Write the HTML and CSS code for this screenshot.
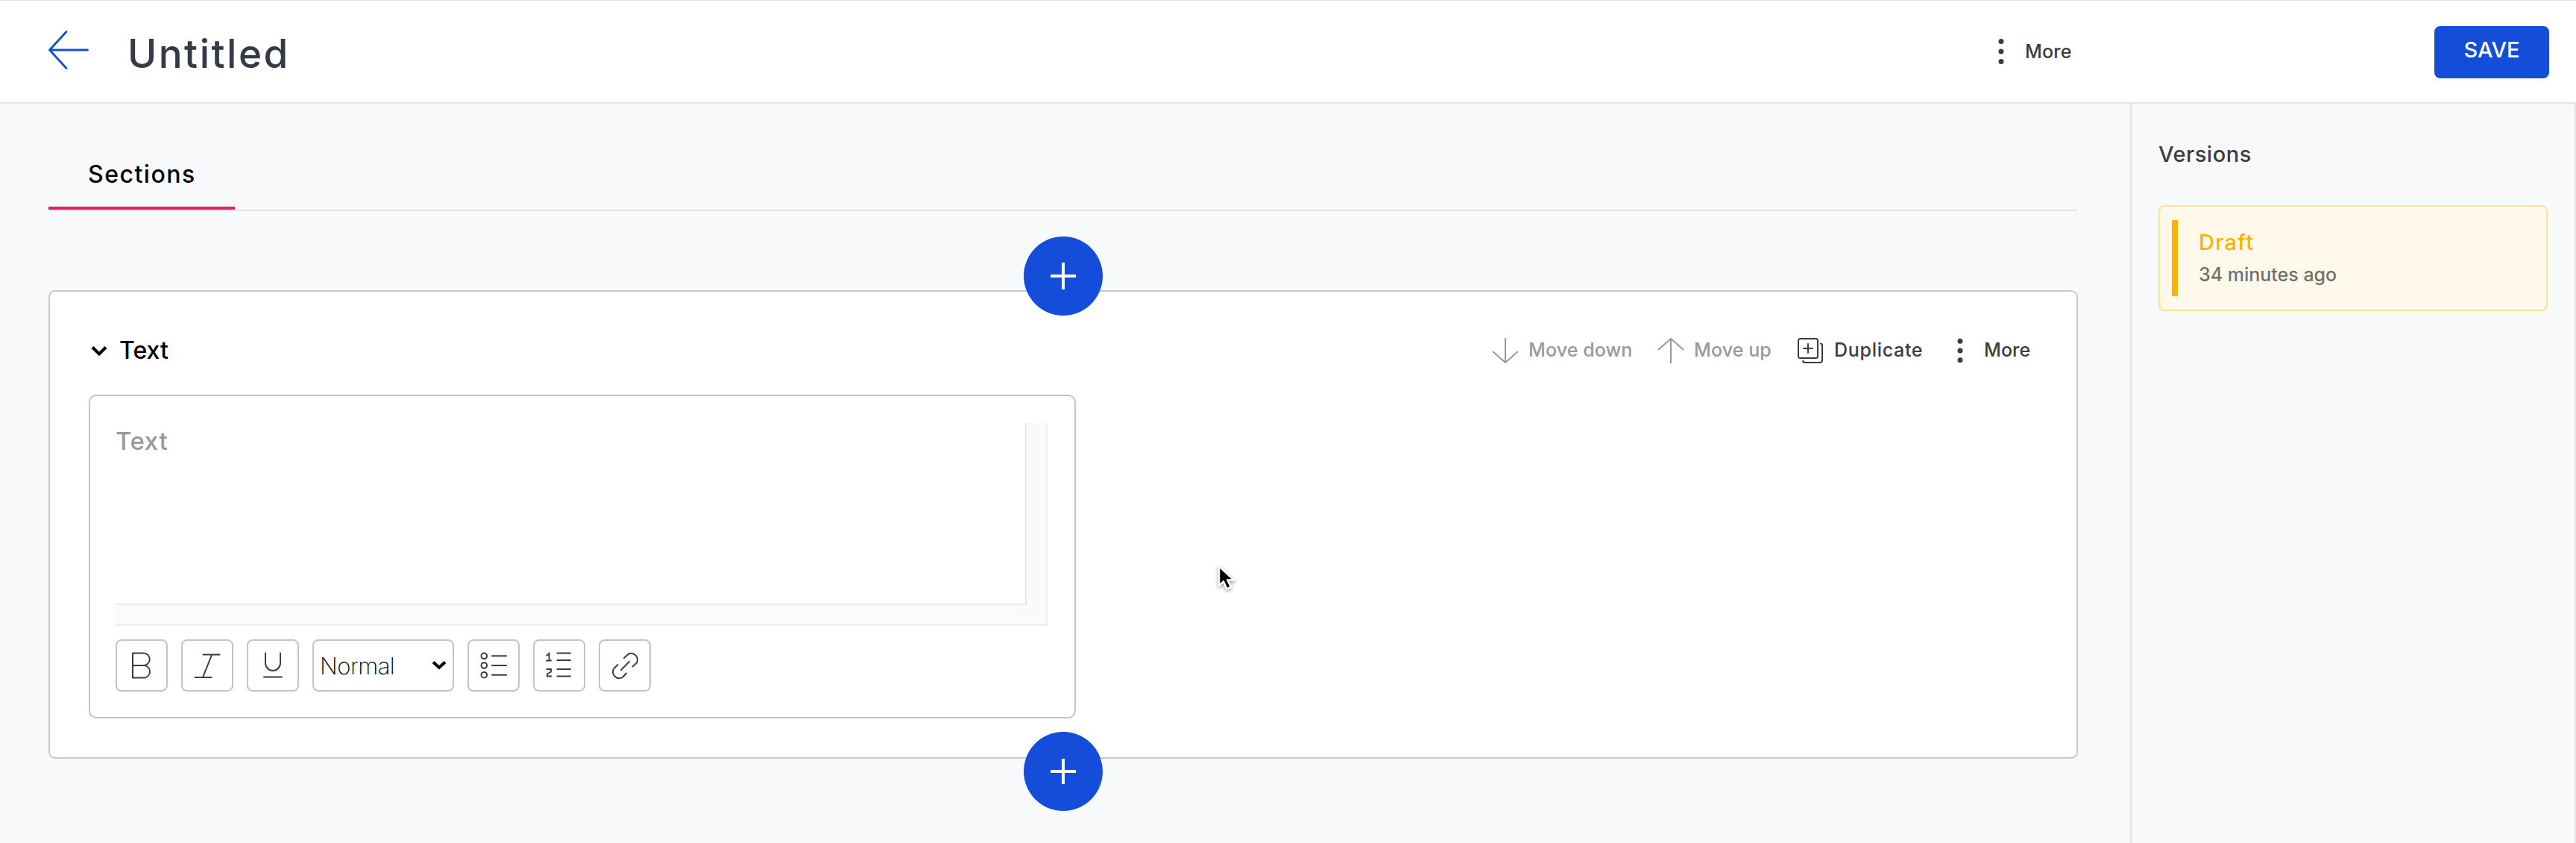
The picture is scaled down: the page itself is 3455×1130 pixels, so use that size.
FILE: index.html
```html
<!DOCTYPE html>
<html lang="en">
<head>
<meta charset="utf-8">
<title>Untitled</title>
<link rel="stylesheet" href="styles.css">
</head>
<body>
<header class="topbar">
  <svg class="back" width="54" height="52" viewBox="0 0 54 52" fill="none" stroke="#144dda" stroke-width="2.8" stroke-linecap="round" stroke-linejoin="round"><path d="M24 1.500L1.500 26L24 50.500M2 26H52.500"/></svg>
  <h1 class="title"><span>Untitled</span></h1>
  <button class="action header-more">
    <svg width="8" height="36" viewBox="0 0 8 36" fill="#3c3c3c"><circle cx="4" cy="4.500" r="3.500"/><circle cx="4" cy="18" r="3.500"/><circle cx="4" cy="31.500" r="3.500"/></svg>
    <span>More</span>
  </button>
  <button class="save"><span>SAVE</span></button>
</header>
<div class="layout">
  <main class="main">
    <nav class="tabs"><a class="tab"><span>Sections</span></a></nav>
    <section class="card">
      <button class="add add-top" aria-label="Add section"><svg width="34" height="36" viewBox="0 0 34 36" stroke="#fff" stroke-width="4"><path d="M0 18H34M17 0V36"/></svg></button>
      <div class="card-head">
        <svg class="chev" width="22" height="15" viewBox="0 0 22 15" fill="none" stroke="#000" stroke-width="4"><path d="M2 2.500L11 11.500L20 2.500"/></svg>
        <h2 class="card-title"><span>Text</span></h2>
        <div class="actions">
          <button class="action muted down">
            <svg width="36" height="34" viewBox="0 0 36 34" fill="none" stroke="#98999a" stroke-width="2"><path d="M18 0V33M1 18L18 33L35 18"/></svg>
            <span>Move down</span>
          </button>
          <button class="action muted up">
            <svg width="36" height="34" viewBox="0 0 36 34" fill="none" stroke="#98999a" stroke-width="2"><path d="M18 34V1M1 16L18 1L35 16"/></svg>
            <span>Move up</span>
          </button>
          <button class="action dup">
            <svg width="34" height="34" viewBox="0 0 34 34" fill="none" stroke="#3c3c3c" stroke-width="2" stroke-linecap="round"><rect x="1" y="1" width="26" height="26" rx="2.500"/><path d="M14 8V20M8 14H20M31 7.500Q33 8 33 10V30Q33 33 30 33H10Q7.500 33 7.200 31"/></svg>
            <span>Duplicate</span>
          </button>
          <button class="action more">
            <svg width="8" height="34" viewBox="0 0 8 34" fill="#3c3c3c"><circle cx="4" cy="4.300" r="3.500"/><circle cx="4" cy="17" r="3.500"/><circle cx="4" cy="29.700" r="3.500"/></svg>
            <span>More</span>
          </button>
        </div>
      </div>
      <div class="editor">
        <div class="area"><div class="area-text"><span>Text</span></div></div>
        <div class="tools">
          <button class="tool"><svg width="66" height="66" viewBox="0 0 66 66"><path d="M21 16.500H35.500A8 8 0 0 1 35.500 33H21M35.500 33H37.500A8.500 8.500 0 0 1 37.500 49.500H21V16.500"/></svg></button>
          <button class="tool"><svg width="66" height="66" viewBox="0 0 66 66"><path d="M27.500 18.500H49.500M16.500 49H38.500M39 19L27 49"/></svg></button>
          <button class="tool"><svg width="66" height="66" viewBox="0 0 66 66"><path d="M23 16.500V30A10 10 0 0 0 43 30V16.500M21 48.500H45"/></svg></button>
          <div class="select"><span>Normal</span><svg width="20" height="14" viewBox="0 0 20 14" fill="none" stroke="#000" stroke-width="4"><path d="M2 2.500L10 9.800L18 2.500"/></svg></div>
          <button class="tool"><svg width="66" height="66" viewBox="0 0 66 66"><circle cx="20.300" cy="20.300" r="3.800"/><circle cx="20.300" cy="33" r="3.800"/><circle cx="20.300" cy="45.700" r="3.800"/><path d="M31 20.300H50M31 33H50M31 45.700H50"/></svg></button>
          <button class="tool"><svg width="66" height="66" viewBox="0 0 66 66"><path d="M30.500 16.500H48M30.500 26H48M30.500 38H48M30.500 47.500H48M16.500 19.500L19.500 17V26M16 26.500H22M16.500 38H22V41.500L17 44.500V47.500H22.500"/></svg></button>
          <button class="tool"><svg width="66" height="66" viewBox="0 0 66 66"><path d="M32 23L38 17.500A8.700 8.700 0 0 1 49 29.500L43.500 34.500M23.500 32L18 37.500A8.700 8.700 0 0 0 30 49L35 43.500M28 39L39 28"/></svg></button>
        </div>
      </div>
      <button class="add add-bottom" aria-label="Add section"><svg width="34" height="34" viewBox="0 0 34 34" stroke="#fff" stroke-width="4"><path d="M0 17H34M17 0V34"/></svg></button>
    </section>
  </main>
  <aside class="side">
    <h3 class="side-title"><span>Versions</span></h3>
    <div class="version">
      <div class="version-bar"></div>
      <div class="version-body">
        <div class="version-name"><span>Draft</span></div>
        <div class="version-time"><span>34 minutes ago</span></div>
      </div>
    </div>
  </aside>
</div>
<svg class="cursor" width="26" height="36" viewBox="0 0 26 36"><path d="M2 2V28L8 22.500L12.500 32.500L18 30L13.500 20.500H22Z" fill="#000" stroke="#fff" stroke-width="2.500"/></svg>
</body>
</html>
```
FILE: styles.css
```css
* { box-sizing: border-box; }
body {
  margin: 0;
  width: 3455px;
  height: 1130px;
  overflow: hidden;
  display: flex;
  flex-direction: column;
  background: #f8f9fb;
  color: #000;
  font-family: Inter, "Liberation Sans", sans-serif;
}
h1, h2, h3 { margin: 0; font-weight: 400; }
button { padding: 0; border: 0; background: none; font: inherit; color: inherit; }
svg { display: block; flex: none; }
span { white-space: nowrap; }

.topbar {
  height: 139px;
  flex: none;
  display: flex;
  align-items: center;
  padding: 0 36px 0 65px;
  background: #fff;
  border-top: 1px solid #e2e3e4;
  border-bottom: 2px solid #e2e3e4;
}
.back { margin-bottom: 5px; }
.title {
  flex: 1;
  margin-left: 52px;
  font-size: 53px;
  line-height: 64px;
  font-weight: 450;
  letter-spacing: 2.5px;
  color: #343a48;
  padding-top: 5px;
}
.save {
  width: 154px;
  height: 70px;
  margin-top: 2px;
  border-radius: 8px;
  background: #144dda;
  color: #fff;
  font-size: 29px;
  font-weight: 450;
  padding-bottom: 7px;
}
.layout { flex: 1; display: flex; }
.main { width: 2857px; padding: 0 70px 0 65px; }
.tabs { height: 144px; display: flex; align-items: flex-end; border-bottom: 2px solid #e2e3e4; }
.tab {
  width: 250px;
  height: 95px;
  border-bottom: 4px solid #f5175f;
  padding-left: 53px;
  font-size: 32px;
  line-height: 95px;
  font-weight: 450;
  letter-spacing: 1.500px;
}
.card {
  position: relative;
  height: 628px;
  margin-top: 106px;
  padding: 0 52px;
  background: #fff;
  border: 2px solid #c8c9cb;
  border-radius: 9px;
}
.card-head { height: 138px; display: flex; align-items: center; padding-top: 20px; }
.chev { margin-left: 3px; }
.card-title { flex: 1; margin-left: 16px; font-size: 32px; line-height: 40px; font-weight: 450; }
.actions { display: flex; }
.action { display: flex; align-items: center; gap: 13px; font-size: 25px; font-weight: 450; color: #3c3c3c; }
.action.muted { color: #98999a; }
.actions span { padding-bottom: 2px; letter-spacing: 0.1px; }
.action.header-more { width: 585px; gap: 28px; letter-spacing: 0.2px; }
.down { width: 222px; }
.up { width: 188px; }
.action.dup { width: 214px; gap: 15px; }
.action.dup span { letter-spacing: 0.7px; }
.action.more { width: 108px; gap: 28px; }
.editor {
  width: 1324px;
  height: 434px;
  padding: 36px 34px 0;
  border: 2px solid #c4c4c4;
  border-radius: 10px;
}
.area {
  width: 1250px;
  height: 272px;
  background: #fafafa;
  border-right: 2px solid #ededed;
  border-bottom: 2px solid #ededed;
}
.area-text {
  width: 1222px;
  height: 244px;
  background: #fff;
  border-right: 2px solid #e8e8e8;
  border-bottom: 2px solid #e8e8e8;
  color: #98999a;
  font-size: 33px;
  line-height: 48px;
  font-weight: 450;
  letter-spacing: 0.6px;
}
.tools { display: flex; gap: 18px; margin-top: 18px; }
.tool, .select { width: 70px; height: 70px; border: 2px solid #c4c4c4; border-radius: 8px; }
.tool svg { fill: none; stroke: #3c3c3c; stroke-width: 2; stroke-linecap: round; }
.select {
  width: 190px;
  display: flex;
  align-items: center;
  justify-content: space-between;
  padding: 0 8px;
  font-size: 31px;
  font-weight: 200;
  letter-spacing: -0.5px;
}
.add {
  position: absolute;
  left: 1306px;
  width: 106px;
  height: 106px;
  border-radius: 50%;
  background: #144dda;
  display: flex;
  align-items: center;
  justify-content: center;
}
.add-top { top: -74px; }
.add-bottom { bottom: -72px; }
.side {
  width: 598px;
  padding: 0 36px;
  border-left: 2px solid #e2e3e4;
  border-right: 2px solid #e2e3e4;
}
.side-title { height: 136px; font-size: 29px; line-height: 136px; font-weight: 450; letter-spacing: 0.5px; color: #3c3c3c; }
.version {
  display: flex;
  width: 522px;
  height: 142px;
  padding: 18px 16px;
  border: 2px solid #ffe199;
  border-radius: 8px;
  background: #fff9eb;
}
.version-bar { width: 8px; background: #ffb000; }
.version-body { margin-left: 28px; padding-top: 10px; }
.version-name { font-size: 29px; line-height: 40px; font-weight: 450; letter-spacing: 1.2px; color: #ffb000; }
.version-time { font-size: 25px; line-height: 46px; font-weight: 450; color: #707070; }
.cursor { position: absolute; left: 1633px; top: 757px; filter: drop-shadow(0 2px 2px rgba(0,0,0,.4)); }
```
